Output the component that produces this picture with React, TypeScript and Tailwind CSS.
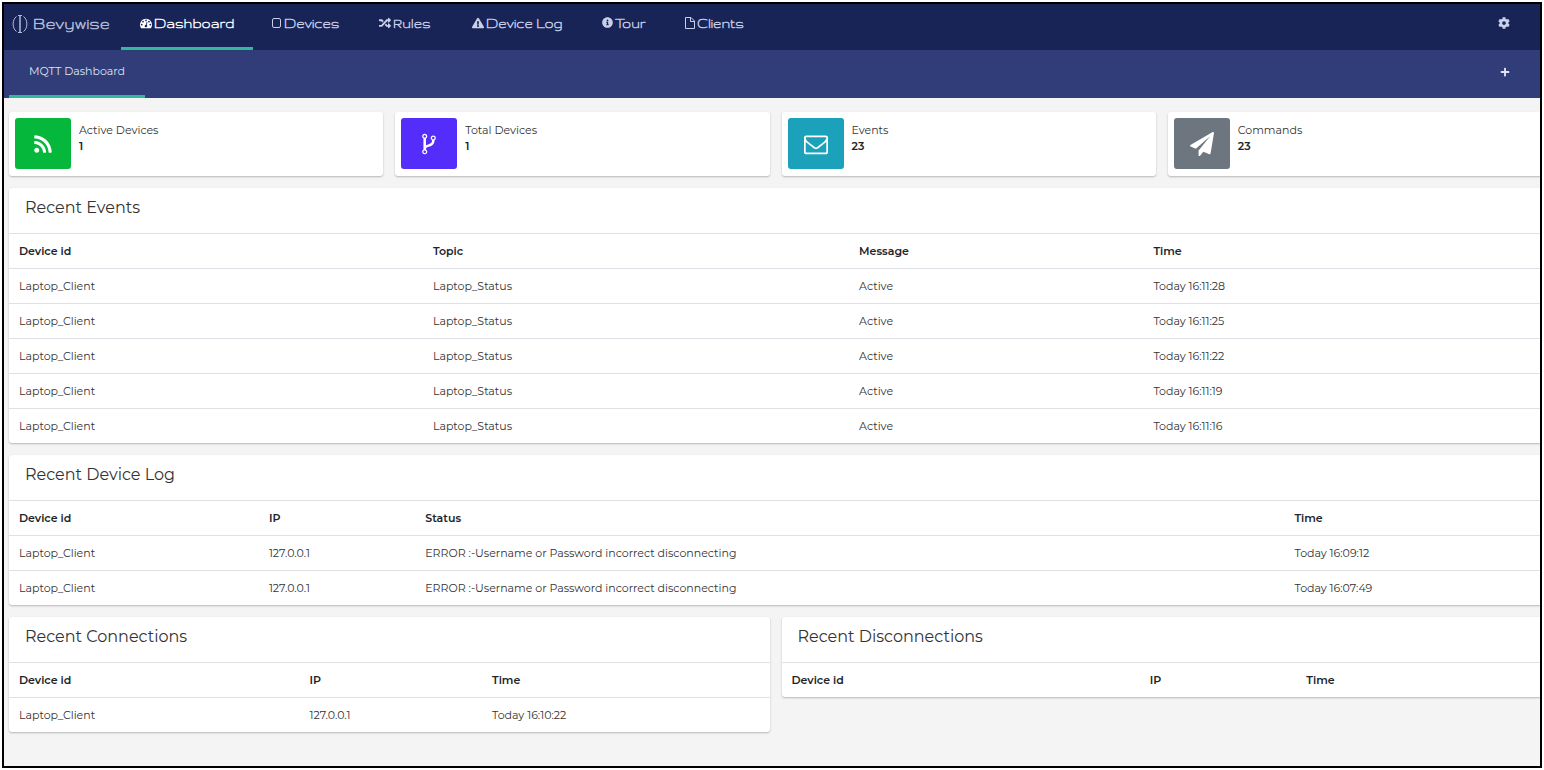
import type { ReactNode } from 'react'
import {
    FaCog,
    FaExclamationTriangle,
    FaInfoCircle,
    FaPlus,
    FaRandom,
    FaRss,
} from 'react-icons/fa'

type IconProps = { className?: string }

const GaugeIcon = ({ className } : IconProps) => (
    <svg viewBox="0 0 1792 1792" aria-hidden="true" className={className} fill="currentColor">
        <path d="M384 1152q0-53-37.500-90.500t-90.500-37.500-90.500 37.500-37.500 90.500 37.500 90.500 90.500 37.500 90.500-37.500 37.500-90.500zm192-448q0-53-37.500-90.500t-90.500-37.500-90.500 37.500-37.500 90.500 37.500 90.500 90.500 37.500 90.500-37.500 37.500-90.500zm428 481l101-382q6-26-7.500-48.500t-38.500-29.500-48 6.500-30 39.500l-101 382q-60 5-107 43.500t-63 98.500q-20 77 20 146t117 89 146-20 89-117q16-60-6-117t-72-91zm660-33q0-53-37.500-90.500t-90.500-37.500-90.500 37.500-37.500 90.500 37.500 90.500 90.500 37.500 90.500-37.500 37.500-90.500zm-640-640q0-53-37.500-90.500t-90.500-37.500-90.500 37.500-37.500 90.500 37.500 90.500 90.500 37.500 90.500-37.500 37.500-90.500zm448 192q0-53-37.500-90.500t-90.500-37.500-90.500 37.500-37.500 90.500 37.500 90.500 90.500 37.500 90.500-37.500 37.500-90.500zm320 448q0 261-141 483-19 29-54 29h-1402q-35 0-54-29-141-221-141-483 0-182 71-348t191-286 286-191 348-71 348 71 286 191 191 286 71 348z" />
    </svg>
)

const ForkIcon = ({ className } : IconProps) => (
    <svg viewBox="0 0 1792 1792" aria-hidden="true" className={className} fill="currentColor">
        <path d="M672 1472q0-40-28-68t-68-28-68 28-28 68 28 68 68 28 68-28 28-68zm0-1152q0-40-28-68t-68-28-68 28-28 68 28 68 68 28 68-28 28-68zm640 128q0-40-28-68t-68-28-68 28-28 68 28 68 68 28 68-28 28-68zm96 0q0 52-26 96.500t-70 69.500q-2 287-226 414-67 38-203 81-128 40-169.500 71t-41.500 100v26q44 25 70 69.500t26 96.500q0 80-56 136t-136 56-136-56-56-136q0-52 26-96.500t70-69.500v-820q-44-25-70-69.500t-26-96.500q0-80 56-136t136-56 136 56 56 136q0 52-26 96.500t-70 69.500v497q54-26 154-57 55-17 87.500-29.500t70.500-31 59-39.500 40.500-51 28-69.500 8.500-91.500q-44-25-70-69.500t-26-96.500q0-80 56-136t136-56 136 56 56 136z" />
    </svg>
)

const EnvelopeIcon = ({ className } : IconProps) => (
    <svg viewBox="0 0 1792 1792" aria-hidden="true" className={className} fill="currentColor">
        <path d="M1664 1504v-768q-32 36-69 66-268 206-426 338-51 43-83 67t-86.500 48.500-102.500 24.500h-2q-48 0-102.500-24.500t-86.500-48.500-83-67q-158-132-426-338-37-30-69-66v768q0 13 9.500 22.500t22.500 9.500h1472q13 0 22.500-9.500t9.500-22.500zm0-1051v-24.500l-.5-13-3-12.500-5.500-9-9-7.500-14-2.500h-1472q-13 0-22.500 9.500t-9.500 22.500q0 168 147 284 193 152 401 317 6 5 35 29.500t46 37.500 44.500 31.500 50.500 27.500 43 9h2q20 0 43-9t50.500-27.500 44.500-31.500 46-37.500 35-29.500q208-165 401-317 54-43 100.500-115.500t46.500-131.500zm128-37v1088q0 66-47 113t-113 47h-1472q-66 0-113-47t-47-113v-1088q0-66 47-113t113-47h1472q66 0 113 47t47 113z" />
    </svg>
)

const PlaneIcon = ({ className } : IconProps) => (
    <svg viewBox="0 0 1792 1792" aria-hidden="true" className={className} fill="currentColor">
        <path d="M1764 11q33 24 27 64l-256 1536q-5 29-32 45-14 8-31 8-11 0-24-5l-453-185-242 295q-18 23-49 23-13 0-22-4-19-7-30.500-23.500t-11.500-36.500v-349l864-1059-1069 925-395-162q-37-14-40-55-2-40 32-59l1664-960q15-9 32-9 20 0 36 11z" />
    </svg>
)

const TabletIcon = ({ className } : IconProps) => (
    <svg viewBox="0 0 10 12" aria-hidden="true" className={className} fill="none" stroke="currentColor">
        <rect x=".500" y="1.500" width="8" height="9" rx="1.500" />
    </svg>
)

const FileIcon = ({ className } : IconProps) => (
    <svg viewBox="0 0 10 12" aria-hidden="true" className={className} fill="none" stroke="currentColor">
        <path d="M.5.5h5.500l3.500 3.500v7.500h-9zM5.500.500v4h4" />
    </svg>
)

const Logo = () => (
    <svg viewBox="0 0 16 20" aria-hidden="true" className="h-5 w-4 shrink-0" fill="none" stroke="currentColor">
        <path d="M4.500 2.500C0 5.500 0 14.500 4.500 17.500M11.500 2.500C16 5.500 16 14.500 11.500 17.500" />
        <path d="M8 1v18" strokeWidth="1.500" />
        <path d="M6 1.500h4M6 18.500h4" />
    </svg>
)

const navigation : {
        name: string;
        icon: any;
        iconSize: string;
        width: string;
        current: boolean;
    }[] = [
    { name: 'Dashboard', icon: GaugeIcon, iconSize: 'size-3', width: 'w-[132px]', current: true },
    { name: 'Devices', icon: TabletIcon, iconSize: 'h-3 w-[10px]', width: 'w-[107px]', current: false },
    { name: 'Rules', icon: FaRandom, iconSize: 'size-3', width: 'w-[93px]', current: false },
    { name: 'Device Log', icon: FaExclamationTriangle, iconSize: 'size-3', width: 'w-[130px]', current: false },
    { name: 'Tour', icon: FaInfoCircle, iconSize: 'size-[11px]', width: 'w-[83px]', current: false },
    { name: 'Clients', icon: FileIcon, iconSize: 'h-3 w-[10px]', width: 'w-[102px]', current: false },
]

const stats = [
    { name: 'Active Devices', value: '1', icon: FaRss, iconSize: 'size-5', color: 'bg-[#05b83b]' },
    { name: 'Total Devices', value: '1', icon: ForkIcon, iconSize: 'size-6', color: 'bg-[#552dfb]' },
    { name: 'Events', value: '23', icon: EnvelopeIcon, iconSize: 'size-6', color: 'bg-[#1ba1ba]' },
    { name: 'Commands', value: '23', icon: PlaneIcon, iconSize: 'size-6', color: 'bg-[#6d757e]' },
]

const events = ['16:11:28', '16:11:25', '16:11:22', '16:11:19', '16:11:16'].map((time) => [
    'Laptop_Client',
    'Laptop_Status',
    'Active',
    `Today ${time}`,
])

const deviceLog = ['16:09:12', '16:07:49'].map((time) => [
    'Laptop_Client',
    '127.0.0.1',
    'ERROR :-Username or Password incorrect disconnecting',
    `Today ${time}`,
])

function classNames(...classes : any) {
    return classes.filter(Boolean).join(' ')
}

const Card = ({ className, children } : { className?: string, children: ReactNode }) => (
    <section className={classNames('rounded-[3px] bg-white shadow-[0_1px_2px_rgba(0,0,0,0.25)]', className)}>
        {children}
    </section>
)

const TableCard = ({ title, columns, rows } : {
    title: string,
    columns: { name: string, width?: string }[],
    rows: string[][],
}) => (
    <Card>
        <h2 className="px-4 pt-2 pb-[13px] text-[16px] leading-6 text-[#333]">{title}</h2>
        <table className="w-full table-fixed border-separate border-spacing-0 text-left text-[11px] leading-4">
            <thead>
                <tr>
                    {columns.map((column) => (
                        <th
                            key={column.name}
                            scope="col"
                            className={classNames('h-[35px] border-t border-[#dee2e6] px-[10px] font-semibold text-[#212529]', column.width)}
                        >
                            {column.name}
                        </th>
                    ))}
                </tr>
            </thead>
            <tbody>
                {rows.map((row, i) => (
                    <tr key={i}>
                        {row.map((cell, j) => (
                            <td key={j} className="h-[35px] border-t border-[#dee2e6] px-[10px] text-[#333]">{cell}</td>
                        ))}
                    </tr>
                ))}
            </tbody>
        </table>
    </Card>
)

export default function App() {
    return (
        <div className="flex min-h-screen bg-white p-[2px] font-['Montserrat','Inter',sans-serif]">
            <div className="min-w-0 grow overflow-hidden border-2 border-black bg-[#f4f4f4]">
                <header>
                    <div className="flex h-[46px] items-start bg-[#182456] font-['Gruppo','DejaVu_Sans',sans-serif] text-[15px] font-bold text-[#c9cfe8]">
                        <a href="#" className="flex w-[117px] shrink-0 items-center gap-[5px] pt-[10px] pl-2 text-[18px] leading-5 text-[#b4bbd8]">
                            <Logo />
                            Bevywise
                        </a>
                        <nav className="flex h-full grow">
                            {navigation.map((item) => (
                                <a
                                    key={item.name}
                                    href="#"
                                    aria-current={item.current ? 'page' : undefined}
                                    className={classNames(
                                        item.current ? 'border-[#30b99c] text-white' : 'border-transparent',
                                        'flex shrink-0 items-start gap-[2px] border-b-[3px] pt-[9px] pl-[19px] leading-5 whitespace-nowrap',
                                        item.width,
                                    )}
                                >
                                    <item.icon aria-hidden="true" className={classNames('mt-1 shrink-0', item.iconSize)} />
                                    {item.name}
                                </a>
                            ))}
                        </nav>
                        <button type="button" aria-label="Settings" className="mt-[13px] mr-[30px]">
                            <FaCog className="size-3" />
                        </button>
                    </div>
                    <div className="flex h-12 items-start justify-between bg-[#303d78] text-[#dfe3f5]">
                        <a href="#" className="ml-[5px] h-full w-[136px] border-b-[3px] border-[#30b99c] pt-[13px] text-center text-[11px] leading-4">
                            MQTT Dashboard
                        </a>
                        <button type="button" aria-label="Add dashboard" className="mt-[17px] mr-[30px]">
                            <FaPlus className="size-[10px]" />
                        </button>
                    </div>
                </header>

                {/* content runs slightly past the right edge of the frame */}
                <main className="-mr-[2px] flex flex-col gap-3 pt-[14px] pb-8 pl-[5px]">
                    <div className="grid grid-cols-4 gap-3">
                        {stats.map((stat) => (
                            <Card key={stat.name} className="flex h-16 gap-2 p-[6px]">
                                <div className={classNames('flex h-[51px] w-14 shrink-0 items-center justify-center rounded-[3px] text-white', stat.color)}>
                                    <stat.icon aria-hidden="true" className={stat.iconSize} />
                                </div>
                                <div className="pt-1 text-[11px] leading-4 text-[#333]">
                                    <p>{stat.name}</p>
                                    <p className="font-semibold text-[#212529]">{stat.value}</p>
                                </div>
                            </Card>
                        ))}
                    </div>
                    <TableCard
                        title="Recent Events"
                        columns={[
                            { name: 'Device id', width: 'w-[27%]' },
                            { name: 'Topic', width: 'w-[27.8%]' },
                            { name: 'Message', width: 'w-[19.2%]' },
                            { name: 'Time' },
                        ]}
                        rows={events}
                    />
                    <TableCard
                        title="Recent Device Log"
                        columns={[
                            { name: 'Device id', width: 'w-[16.3%]' },
                            { name: 'IP', width: 'w-[10.2%]' },
                            { name: 'Status', width: 'w-[56.7%]' },
                            { name: 'Time' },
                        ]}
                        rows={deviceLog}
                    />
                    <div className="grid grid-cols-2 items-start gap-3">
                        <TableCard
                            title="Recent Connections"
                            columns={[
                                { name: 'Device id', width: 'w-[38.2%]' },
                                { name: 'IP', width: 'w-[24%]' },
                                { name: 'Time' },
                            ]}
                            rows={[['Laptop_Client', '127.0.0.1', 'Today 16:10:22']]}
                        />
                        <TableCard
                            title="Recent Disconnections"
                            columns={[
                                { name: 'Device id', width: 'w-[47.1%]' },
                                { name: 'IP', width: 'w-[20.6%]' },
                                { name: 'Time' },
                            ]}
                            rows={[]}
                        />
                    </div>
                </main>
            </div>
        </div>
    )
}
